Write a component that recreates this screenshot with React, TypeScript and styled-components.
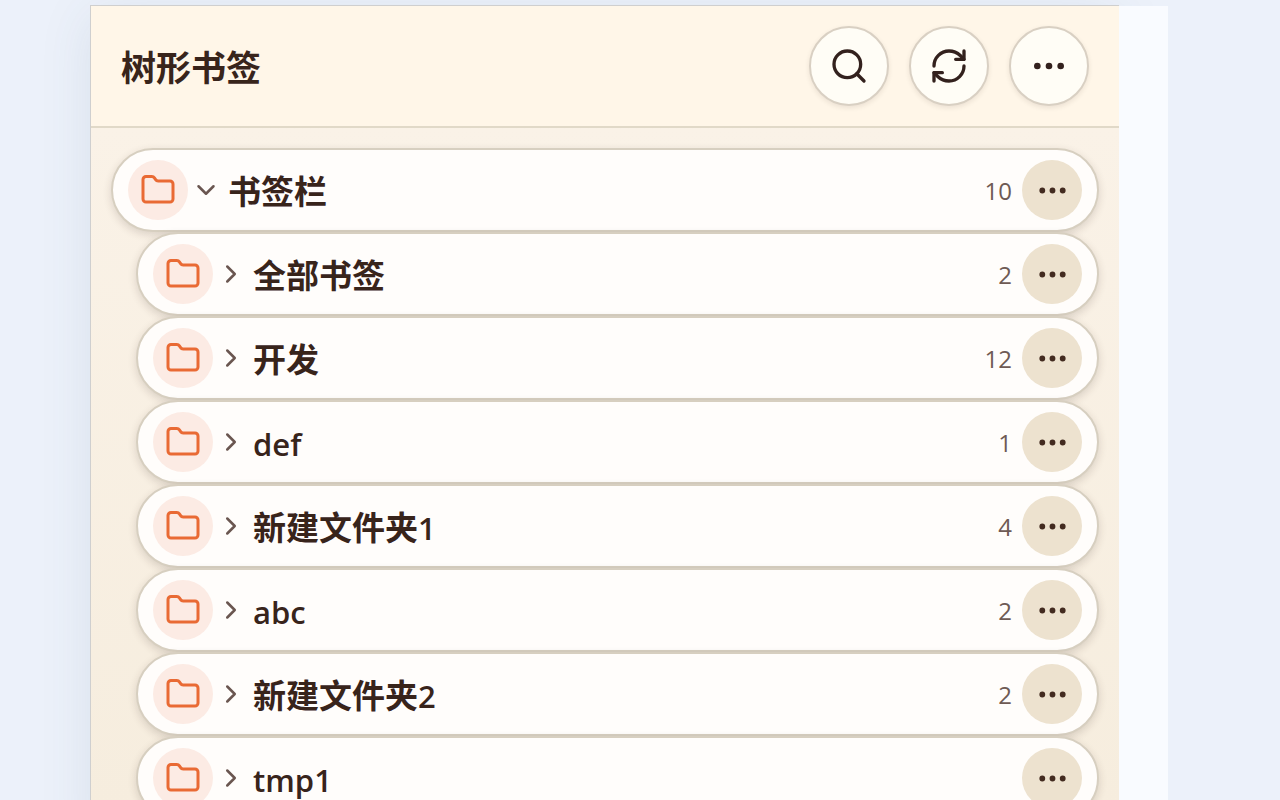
import React from 'react';
import styled, { createGlobalStyle } from 'styled-components';
import { ChevronDown, ChevronRight, Ellipsis, Folder, RefreshCw, Search } from 'lucide-react';

const GlobalStyle = createGlobalStyle`
  * { box-sizing: border-box; }
  body {
    margin: 0;
    overflow: hidden;
    background: #ecf1fa;
    color: #38241b;
    font-family: 'Open Sans', 'Noto Sans CJK SC', sans-serif;
  }
`;

const Page = styled.main`
  display: flex;
  height: 100vh;
  padding: 5px 112px 0 90px;
  overflow: hidden;
`;

const Panel = styled.section`
  flex: 1;
  min-width: 0;
  height: max-content;
  min-height: 100%;
  border: 1px solid #cfcfcf;
  border-right: 0;
  background: linear-gradient(180deg, #faf2e7 120px, #f6edde 800px);
  box-shadow: 0 10px 50px rgba(60, 90, 110, 0.1);
`;

const Gutter = styled.div`
  position: relative;
  width: 49px;
  margin-top: 1px;
  background: #f9fbff;
  box-shadow: 80px 0 0 80px #ecf1fa;
  clip-path: inset(0 -112px 0 0);
`;

const Header = styled.header`
  display: flex;
  align-items: center;
  justify-content: space-between;
  padding: 20px 30px;
  border-bottom: 2px solid #e1d9c8;
  background: #fff6e8;
`;

const Title = styled.h1`
  margin: 0;
  padding-top: 4px;
  font-size: 35px;
  line-height: 50px;
  font-weight: 700;
`;

const Actions = styled.div`
  display: flex;
  gap: 20px;
`;

const RoundButton = styled.button<{ $size: number; $raised?: boolean }>`
  display: flex;
  align-items: center;
  justify-content: center;
  flex: none;
  width: ${(p) => p.$size}px;
  height: ${(p) => p.$size}px;
  padding: 0;
  border: ${(p) => (p.$raised ? '2px solid #d9d0c3' : '0')};
  border-radius: 50%;
  background: ${(p) => (p.$raised ? '#fffdf6' : '#ede2cf')};
  box-shadow: ${(p) => (p.$raised ? '0 2px 5px rgba(58, 35, 28, 0.1)' : 'none')};
  color: ${(p) => (p.$raised ? '#33211d' : '#432b20')};
  cursor: pointer;
`;

const Tree = styled.ul`
  margin: 0;
  padding: 20px;
  list-style: none;
`;

const Branch = styled.ul`
  margin: 0;
  padding: 0 0 0 25px;
  list-style: none;
`;

const Row = styled.div`
  display: flex;
  align-items: center;
  height: 84px;
  padding: 0 15px;
  border: 2px solid #d7cfc0;
  border-radius: 42px;
  background: #fffdfb;
  box-shadow: 0 3px 8px rgba(58, 35, 28, 0.16);
`;

const FolderBadge = styled.span`
  display: flex;
  align-items: center;
  justify-content: center;
  flex: none;
  width: 60px;
  height: 60px;
  border-radius: 50%;
  background: #fcebe4;
  color: #e96a34;
`;

const Toggle = styled.button`
  display: flex;
  flex: none;
  margin: 0 7px 0 3px;
  padding: 0;
  border: 0;
  background: none;
  color: #6a5650;
  cursor: pointer;
`;

const Name = styled.span`
  flex: 1;
  min-width: 0;
  padding-top: 4px;
  font-size: 33px;
  line-height: 48px;
  font-weight: 700;
  white-space: nowrap;
`;

const Latin = styled.span`
  font-size: 31px;
  font-weight: 600;
`;

const Count = styled.span`
  margin: 0 10px;
  padding-top: 2px;
  font-size: 24px;
  line-height: 32px;
  color: #6e5a54;
`;

type Node = { name: string; count?: number; children?: Node[] };

const bookmarks: Node = {
  name: '书签栏',
  count: 10,
  children: [
    { name: '全部书签', count: 2 },
    { name: '开发', count: 12 },
    { name: 'def', count: 1 },
    { name: '新建文件夹1', count: 4 },
    { name: 'abc', count: 2 },
    { name: '新建文件夹2', count: 2 },
    { name: 'tmp1' },
  ],
};

function Label({ text }: { text: string }) {
  const parts = text.split(/([\x20-\x7e]+)/).filter(Boolean);
  return (
    <Name>
      {parts.map((part, i) => (/^[\x20-\x7e]/.test(part) ? <Latin key={i}>{part}</Latin> : part))}
    </Name>
  );
}

function TreeItem({ node }: { node: Node }) {
  const Chevron = node.children ? ChevronDown : ChevronRight;
  return (
    <li>
      <Row>
        <FolderBadge>
          <Folder size={36} strokeWidth={2} />
        </FolderBadge>
        <Toggle aria-label={node.name} aria-expanded={Boolean(node.children)}>
          <Chevron size={30} strokeWidth={2} />
        </Toggle>
        <Label text={node.name} />
        {node.count !== undefined && <Count>{node.count}</Count>}
        <RoundButton $size={60} aria-label="更多">
          <Ellipsis size={35} strokeWidth={2} />
        </RoundButton>
      </Row>
      {node.children && (
        <Branch>
          {node.children.map((child) => (
            <TreeItem key={child.name} node={child} />
          ))}
        </Branch>
      )}
    </li>
  );
}

export default function App() {
  return (
    <>
      <GlobalStyle />
      <Page>
        <Panel>
          <Header>
            <Title>树形书签</Title>
            <Actions>
              <RoundButton $size={80} $raised aria-label="搜索">
                <Search size={40} strokeWidth={2} />
              </RoundButton>
              <RoundButton $size={80} $raised aria-label="刷新">
                <RefreshCw size={40} strokeWidth={2} />
              </RoundButton>
              <RoundButton $size={80} $raised aria-label="更多">
                <Ellipsis size={40} strokeWidth={2} />
              </RoundButton>
            </Actions>
          </Header>
          <Tree>
            <TreeItem node={bookmarks} />
          </Tree>
        </Panel>
        <Gutter />
      </Page>
    </>
  );
}
